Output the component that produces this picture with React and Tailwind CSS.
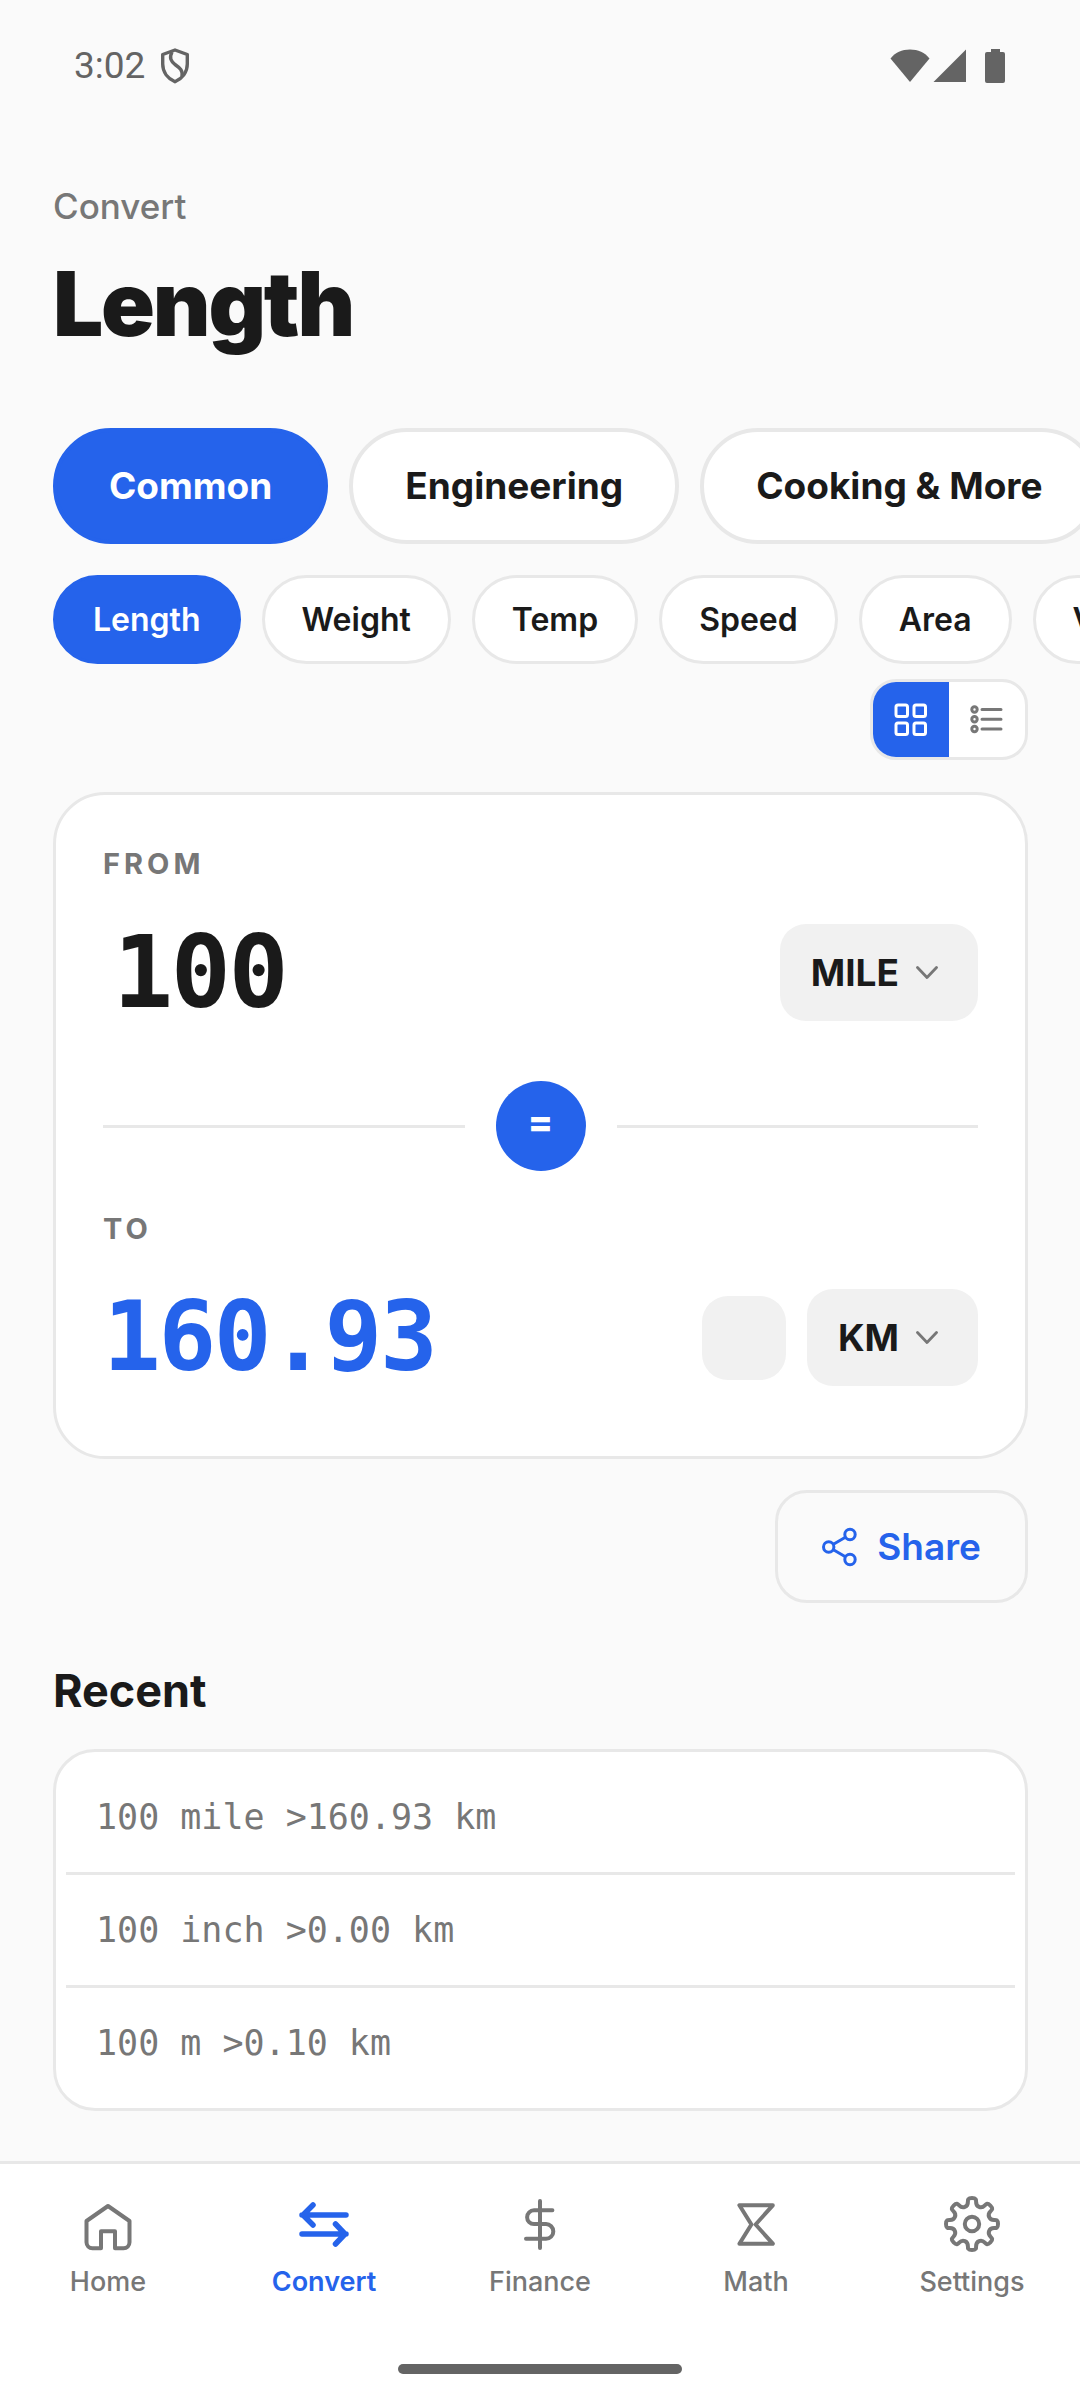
import { useState } from 'react'

const groups = ['Common', 'Engineering', 'Cooking & More']
const categories = ['Length', 'Weight', 'Temp', 'Speed', 'Area', 'Volume']
const units = ['MILE', 'KM', 'INCH', 'M']
const recent = ['100 mile >160.93 km', '100 inch >0.00 km', '100 m >0.10 km']

// eight-lobed gear outline around (29, 29)
const gearPath = (() => {
    const point = (angle, radius, along) => {
        const x = 29 + radius * Math.sin(angle) + along * Math.cos(angle)
        const y = 29 - radius * Math.cos(angle) + along * Math.sin(angle)
        return `${x.toFixed(2)} ${y.toFixed(2)}`
    }
    let d = `M${point(0, 26, 0)}`
    for (let i = 0; i < 8; i++) {
        const a = (i * Math.PI) / 4
        const valley = a + Math.PI / 8
        const next = a + Math.PI / 4
        d += `C${point(a, 26, 8)} ${point(valley, 18.5, -7)} ${point(valley, 18.5, 0)}`
        d += `C${point(valley, 18.5, 7)} ${point(next, 26, -8)} ${point(next, 26, 0)}`
    }
    return d + 'Z'
})()

const NavIcon = ({ children, strokeWidth = 4 }) => (
    <svg
        width="58"
        height="58"
        viewBox="0 0 58 58"
        fill="none"
        stroke="currentColor"
        strokeWidth={strokeWidth}
        strokeLinecap="round"
        strokeLinejoin="round"
        aria-hidden="true"
    >
        {children}
    </svg>
)

const tabs = [
    {
        name: 'Home',
        icon: (
            <NavIcon>
                <path d="M22 53.3H13.5a6 6 0 0 1-6-6V26L29 11l21.5 15v21.3a6 6 0 0 1-6 6H36v-17H22Z" />
            </NavIcon>
        ),
    },
    {
        name: 'Convert',
        icon: (
            <NavIcon strokeWidth={5.5}>
                <path d="M51 20H7M18 10 8 20l10 10M7 39h44M40.5 29 50 39l-9.5 10" />
            </NavIcon>
        ),
    },
    {
        name: 'Finance',
        icon: (
            <NavIcon>
                <path d="M29 6v47M41.4 15.3H23a6.9 6.9 0 0 0 0 13.8h12a7.3 7.3 0 0 1 0 14.6H15" />
            </NavIcon>
        ),
    },
    {
        name: 'Math',
        icon: (
            <NavIcon>
                <path d="M12.4 10.3H45.8L28.6 29.5 45.8 48.7H12.4L24.4 29.5Z" />
            </NavIcon>
        ),
    },
    {
        name: 'Settings',
        icon: (
            <NavIcon>
                <path d={gearPath} />
                <circle cx="29" cy="29" r="7.2" />
            </NavIcon>
        ),
    },
]

const StatusBar = () => (
    <header className="flex items-center justify-between pl-[74px] pr-[75px] py-11 text-[#646464]">
        <div className="flex items-center gap-[15px]">
            <span className="text-[37px] leading-[44px] font-['Roboto',sans-serif]">3:02</span>
            <svg width="30" height="36" viewBox="0 0 30 36" fill="none" stroke="currentColor" strokeWidth="3.4" strokeLinejoin="round" aria-hidden="true">
                <path d="M15 2 27.3 6.5V16c0 8-5 14.5-12.3 17.7C7.7 30.5 2.7 24 2.7 16V6.5Z" />
                <path d="M12 4C9 10 11 13 15 16.500c5 3.500 8 6 7 12" />
            </svg>
        </div>
        <div className="flex items-center">
            <svg className="mr-[3px]" width="40" height="34" viewBox="0 0 40 34" fill="currentColor" aria-hidden="true">
                <path d="M0.5 9.5C5 3.5 12 0.5 20 0.5s15 3 19.500 9L20 33Z" />
            </svg>
            <svg className="mr-[19px]" width="33" height="34" viewBox="0 0 33 34" fill="currentColor" aria-hidden="true">
                <path d="M33 0.5V33H0.5Z" />
            </svg>
            <svg width="20" height="34" viewBox="0 0 20 34" fill="currentColor" aria-hidden="true">
                <path d="M6 0h9v3h3a2 2 0 0 1 2 2v27a2 2 0 0 1-2 2H2a2 2 0 0 1-2-2V5a2 2 0 0 1 2-2h4Z" />
            </svg>
        </div>
    </header>
)

const UnitSelect = ({ label, value, onChange }) => (
    <div className="relative">
        <select
            aria-label={label}
            value={value}
            onChange={(e) => onChange(e.target.value)}
            className="field-sizing-content appearance-none h-[97px] pl-[31px] pr-[79px] rounded-[26px] bg-[#f1f1f1] text-[37px] font-bold"
        >
            {units.map((unit) => (
                <option key={unit}>{unit}</option>
            ))}
        </select>
        <svg
            className="absolute right-10 top-[42px] pointer-events-none text-[#777777]"
            width="22"
            height="14"
            viewBox="0 0 22 14"
            fill="none"
            stroke="currentColor"
            strokeWidth="2.8"
            strokeLinecap="round"
            strokeLinejoin="round"
            aria-hidden="true"
        >
            <path d="M1.5 1.5 11 11.5 20.5 1.5" />
        </svg>
    </div>
)

const App = () => {
    const [group, setGroup] = useState('Common')
    const [category, setCategory] = useState('Length')
    const [view, setView] = useState('grid')
    const [amount, setAmount] = useState('100')
    const [from, setFrom] = useState('MILE')
    const [to, setTo] = useState('KM')

    return (
        <div className="min-h-screen flex flex-col bg-[#fafafa] text-[#1a1a1a] font-['Inter',sans-serif]">
            <StatusBar />

            <main className="flex-1 pt-[52px] pb-[50px]">
                <div className="px-[53px]">
                    <p className="text-[35px] leading-[44px] font-medium text-[#777777]">Convert</p>
                    <h1 className="mt-[22px] text-[89px] leading-[108px] font-black tracking-tight">{category}</h1>
                </div>

                {/* Category groups */}
                <div className="mt-[70px] px-[53px] flex gap-[21px] overflow-x-auto [scrollbar-width:none]">
                    {groups.map((name) => (
                        <button
                            key={name}
                            type="button"
                            onClick={() => setGroup(name)}
                            className={`shrink-0 h-[116px] px-[52px] rounded-full border-4 text-[37px] font-bold ${
                                name === group ? 'bg-[#2563eb] border-[#2563eb] text-white' : 'bg-white border-[#e8e8e8]'
                            }`}
                        >
                            {name}
                        </button>
                    ))}
                </div>

                {/* Categories */}
                <div className="mt-[31px] px-[53px] flex gap-[21px] overflow-x-auto [scrollbar-width:none]">
                    {categories.map((name) => (
                        <button
                            key={name}
                            type="button"
                            onClick={() => setCategory(name)}
                            className={`shrink-0 h-[89px] px-[37px] rounded-full border-[3px] text-[32px] font-semibold ${
                                name === category ? 'bg-[#2563eb] border-[#2563eb] text-white' : 'bg-white border-[#e8e8e8]'
                            }`}
                        >
                            {name}
                        </button>
                    ))}
                </div>

                <div className="pl-[53px] pr-[52px]">
                    {/* Grid / list switch */}
                    <div className="mt-[15px] ml-auto w-fit flex rounded-[26px] border-[3px] border-[#e8e8e8] bg-white overflow-hidden">
                        <button
                            type="button"
                            aria-label="Grid view"
                            onClick={() => setView('grid')}
                            className={`w-[76px] h-[75px] flex items-center justify-center ${view === 'grid' ? 'bg-[#2563eb] text-white' : 'text-[#777777]'}`}
                        >
                            <svg width="34" height="34" viewBox="0 0 34 34" fill="none" stroke="currentColor" strokeWidth="3" aria-hidden="true">
                                <rect x="2" y="2" width="11.5" height="11.5" rx="2" />
                                <rect x="20" y="2" width="11.5" height="11.5" rx="2" />
                                <rect x="2" y="20" width="11.5" height="11.5" rx="2" />
                                <rect x="20" y="20" width="11.5" height="11.5" rx="2" />
                            </svg>
                        </button>
                        <button
                            type="button"
                            aria-label="List view"
                            onClick={() => setView('list')}
                            className={`w-[76px] h-[75px] flex items-center justify-center ${view === 'list' ? 'bg-[#2563eb] text-white' : 'text-[#777777]'}`}
                        >
                            <svg width="34" height="34" viewBox="0 0 34 34" fill="none" stroke="currentColor" strokeWidth="3" strokeLinecap="round" aria-hidden="true">
                                <circle cx="4.5" cy="6.5" r="2.7" />
                                <circle cx="4.5" cy="16.3" r="2.7" />
                                <circle cx="4.500" cy="26" r="2.7" />
                                <path d="M12 6.5h19M12 16.3h19M12 26h19" />
                            </svg>
                        </button>
                    </div>

                    {/* Converter */}
                    <section className="mt-8 px-[47px] pt-[51px] pb-[70px] rounded-[52px] border-[3px] border-[#e8e8e8] bg-white">
                        <label htmlFor="amount" className="block text-[29px] leading-9 font-bold tracking-[4px] text-[#777777]">
                            FROM
                        </label>
                        <div className="mt-[42px] flex items-center justify-between">
                            <input
                                id="amount"
                                inputMode="decimal"
                                value={amount}
                                onChange={(e) => setAmount(e.target.value)}
                                className="flex-1 min-w-0 h-[97px] pl-[10px] text-[100px] leading-none font-bold tracking-tight font-['DejaVu_Sans_Mono',monospace]"
                            />
                            <UnitSelect label="From unit" value={from} onChange={setFrom} />
                        </div>

                        <div className="mt-[60px] flex items-center gap-[31px]">
                            <div className="flex-1 h-[3px] bg-[#e8e8e8]"></div>
                            <div className="w-[90px] h-[90px] pb-2 rounded-full bg-[#2563eb] flex items-center justify-center text-[37px] font-extrabold text-white">
                                =
                            </div>
                            <div className="flex-1 h-[3px] bg-[#e8e8e8]"></div>
                        </div>

                        <p className="mt-10 text-[29px] leading-9 font-bold tracking-[4px] text-[#777777]">TO</p>
                        <div className="mt-[42px] flex items-center gap-[21px]">
                            <output htmlFor="amount" className="flex-1 text-[96px] leading-[97px] font-bold tracking-tight text-[#2563eb] font-['DejaVu_Sans_Mono',monospace]">
                                160.93
                            </output>
                            <button type="button" aria-label="Copy result" className="w-[84px] h-[84px] rounded-[26px] bg-[#f1f1f1]"></button>
                            <UnitSelect label="To unit" value={to} onChange={setTo} />
                        </div>
                    </section>

                    <button
                        type="button"
                        className="mt-[31px] ml-auto h-[113px] px-11 flex items-center gap-5 rounded-[32px] border-[3px] border-[#e8e8e8] text-[37px] font-semibold text-[#2563eb]"
                    >
                        <svg width="35" height="40" viewBox="0 0 35 40" fill="none" stroke="currentColor" strokeWidth="3" aria-hidden="true">
                            <circle cx="6.7" cy="20" r="5.2" />
                            <circle cx="28" cy="7.5" r="5.2" />
                            <circle cx="28" cy="32.5" r="5.2" />
                            <path d="m11.4 17.3 12-7M11.4 22.7l12 7" />
                        </svg>
                        Share
                    </button>

                    {/* Recent conversions */}
                    <h2 className="mt-[60px] text-[45px] leading-[56px] font-bold">Recent</h2>
                    <ul className="mt-[30px] px-[10px] py-[10px] rounded-[42px] border-[3px] border-[#e8e8e8] bg-white divide-y-[3px] divide-[#e8e8e8]">
                        {recent.map((entry) => (
                            <li key={entry} className="px-[30px] py-[33px] text-[35px] leading-[44px] text-[#777777] font-['DejaVu_Sans_Mono',monospace]">
                                {entry}
                            </li>
                        ))}
                    </ul>
                </div>
            </main>

            <nav className="border-t-[3px] border-[#e8e8e8] bg-white pt-[31px] pb-[26px]">
                <div className="grid grid-cols-5">
                    {tabs.map(({ name, icon }) => (
                        <a
                            key={name}
                            href={`#${name.toLowerCase()}`}
                            className={`flex flex-col items-center gap-[11px] text-[27px] leading-9 ${
                                name === 'Convert' ? 'font-semibold text-[#2563eb]' : 'font-medium text-[#777777]'
                            }`}
                        >
                            {icon}
                            {name}
                        </a>
                    ))}
                </div>
                <div className="mt-16 mx-auto w-[284px] h-[10px] rounded-full bg-[#646464]"></div>
            </nav>
        </div>
    )
}

export default App
